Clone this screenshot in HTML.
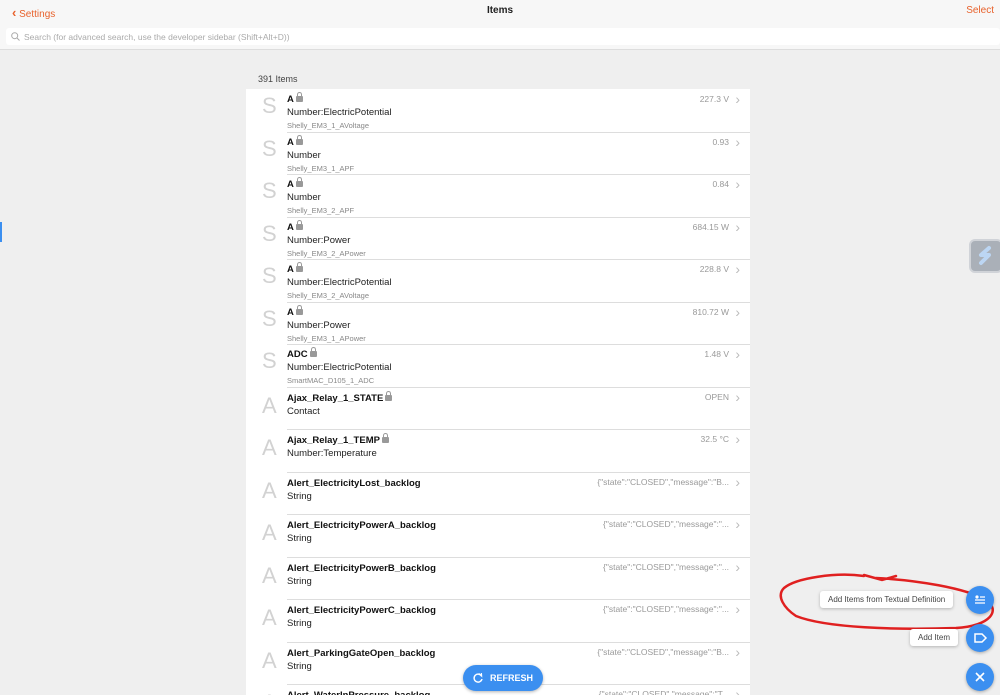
<!DOCTYPE html>
<html><head><meta charset="utf-8"><style>
*{margin:0;padding:0;box-sizing:border-box}
html,body{width:1000px;height:695px;overflow:hidden}
body{background:#efefef;font-family:"Liberation Sans",sans-serif;position:relative}
.hdr{position:absolute;left:0;top:0;width:1000px;height:50px;background:#f7f7f7;border-bottom:1px solid #ddd}
.back{position:absolute;left:12px;top:5px;color:#e8622c;font-size:10px}
.title{position:absolute;left:0;width:1000px;text-align:center;top:5px;font-size:10px;color:#222;font-weight:bold}
.sel{position:absolute;right:6px;top:5px;color:#e8622c;font-size:10px}
.search{position:absolute;left:6px;top:28px;width:994px;height:17px;background:#fff;border-radius:3px;color:#aaa;font-size:8.5px;padding:4px 0 0 18px}
.count{position:absolute;left:258px;top:74px;font-size:9px;color:#444}
.list{position:absolute;left:246px;top:89px;width:504px;height:606px;background:#fff;overflow:hidden}
.row{position:absolute;left:0;width:504px;height:42.5px}
.row .ic{position:absolute;left:16px;top:3px;font-size:22px;color:#d2d2d2;font-weight:normal}
.row .t{position:absolute;left:41px;top:4px;font-size:9.5px;font-weight:bold;color:#111}
.row .s{position:absolute;left:41px;top:17px;font-size:9.5px;color:#222}
.row .n{position:absolute;left:41px;top:31px;font-size:7.5px;color:#888}
.row .v{position:absolute;right:21px;top:4px;font-size:8.5px;color:#999}
.row .c{position:absolute;right:10px;top:1px;font-size:14px;color:#bbb}
.row .ln{position:absolute;left:41px;right:0;bottom:0;border-bottom:1px solid #ddd}
.lock{display:inline-block;width:7px;height:6px;background:#999;border-radius:1px;margin-left:2px;position:relative;top:0}
.lock:before{content:"";position:absolute;left:1px;top:-4px;width:3px;height:4px;border:1px solid #999;border-bottom:none;border-radius:3px 3px 0 0}
.fab{position:absolute;width:28px;height:28px;border-radius:50%;background:#3b8ff0;box-shadow:0 1px 3px rgba(0,0,0,.3);color:#fff;text-align:center}
.lbl{position:absolute;background:#fff;border-radius:3px;box-shadow:0 1px 3px rgba(0,0,0,.25);font-size:8px;color:#444;padding:4px 8px}
.refresh{position:absolute;left:463px;top:665px;width:80px;height:26px;border-radius:13px;background:#3b8ff0;color:#fff;font-size:9px;font-weight:bold;box-shadow:0 1px 3px rgba(0,0,0,.3);padding:8px 0 0 27px}
</style></head><body>
<div class="hdr">
<div class="back"><span style="font-size:13px;font-weight:bold">‹</span> Settings</div>
<div class="title">Items</div>
<div class="sel">Select</div>
<div class="search"><svg style="position:absolute;left:5px;top:4px" width="9" height="9" viewBox="0 0 9 9"><circle cx="3.7" cy="3.7" r="3" fill="none" stroke="#aaa"/><path d="M6 6l2.5 2.5" stroke="#aaa"/></svg>Search (for advanced search, use the developer sidebar (Shift+Alt+D))</div>
</div>
<div style="position:absolute;left:0;top:222px;width:2px;height:20px;background:#3b8ff0"></div>
<div class="count">391 Items</div>
<div class="list">
<div class="row" style="top:1px"><div class="ic">S</div><div class="t">A<span class="lock"></span></div><div class="s">Number:ElectricPotential</div><div class="n">Shelly_EM3_1_AVoltage</div><div class="v">227.3 V</div><div class="c">›</div><div class="ln"></div></div>
<div class="row" style="top:43.5px"><div class="ic">S</div><div class="t">A<span class="lock"></span></div><div class="s">Number</div><div class="n">Shelly_EM3_1_APF</div><div class="v">0.93</div><div class="c">›</div><div class="ln"></div></div>
<div class="row" style="top:86px"><div class="ic">S</div><div class="t">A<span class="lock"></span></div><div class="s">Number</div><div class="n">Shelly_EM3_2_APF</div><div class="v">0.84</div><div class="c">›</div><div class="ln"></div></div>
<div class="row" style="top:128.5px"><div class="ic">S</div><div class="t">A<span class="lock"></span></div><div class="s">Number:Power</div><div class="n">Shelly_EM3_2_APower</div><div class="v">684.15 W</div><div class="c">›</div><div class="ln"></div></div>
<div class="row" style="top:171px"><div class="ic">S</div><div class="t">A<span class="lock"></span></div><div class="s">Number:ElectricPotential</div><div class="n">Shelly_EM3_2_AVoltage</div><div class="v">228.8 V</div><div class="c">›</div><div class="ln"></div></div>
<div class="row" style="top:213.5px"><div class="ic">S</div><div class="t">A<span class="lock"></span></div><div class="s">Number:Power</div><div class="n">Shelly_EM3_1_APower</div><div class="v">810.72 W</div><div class="c">›</div><div class="ln"></div></div>
<div class="row" style="top:256px"><div class="ic">S</div><div class="t">ADC<span class="lock"></span></div><div class="s">Number:ElectricPotential</div><div class="n">SmartMAC_D105_1_ADC</div><div class="v">1.48 V</div><div class="c">›</div><div class="ln"></div></div>
<div class="row" style="top:298.5px"><div class="ic" style="top:5px">A</div><div class="t" style="top:5px">Ajax_Relay_1_STATE<span class="lock"></span></div><div class="s" style="top:18px">Contact</div><div class="v">OPEN</div><div class="c">›</div><div class="ln"></div></div>
<div class="row" style="top:341px"><div class="ic" style="top:5px">A</div><div class="t" style="top:5px">Ajax_Relay_1_TEMP<span class="lock"></span></div><div class="s" style="top:18px">Number:Temperature</div><div class="v">32.5 °C</div><div class="c">›</div><div class="ln"></div></div>
<div class="row" style="top:383.5px"><div class="ic" style="top:5px">A</div><div class="t" style="top:5px">Alert_ElectricityLost_backlog</div><div class="s" style="top:18px">String</div><div class="v">{"state":"CLOSED","message":"B...</div><div class="c">›</div><div class="ln"></div></div>
<div class="row" style="top:426px"><div class="ic" style="top:5px">A</div><div class="t" style="top:5px">Alert_ElectricityPowerA_backlog</div><div class="s" style="top:18px">String</div><div class="v">{"state":"CLOSED","message":"...</div><div class="c">›</div><div class="ln"></div></div>
<div class="row" style="top:468.5px"><div class="ic" style="top:5px">A</div><div class="t" style="top:5px">Alert_ElectricityPowerB_backlog</div><div class="s" style="top:18px">String</div><div class="v">{"state":"CLOSED","message":"...</div><div class="c">›</div><div class="ln"></div></div>
<div class="row" style="top:511px"><div class="ic" style="top:5px">A</div><div class="t" style="top:5px">Alert_ElectricityPowerC_backlog</div><div class="s" style="top:18px">String</div><div class="v">{"state":"CLOSED","message":"...</div><div class="c">›</div><div class="ln"></div></div>
<div class="row" style="top:553.5px"><div class="ic" style="top:5px">A</div><div class="t" style="top:5px">Alert_ParkingGateOpen_backlog</div><div class="s" style="top:18px">String</div><div class="v">{"state":"CLOSED","message":"B...</div><div class="c">›</div><div class="ln"></div></div>
<div class="row" style="top:596px"><div class="ic" style="top:5px">A</div><div class="t" style="top:5px">Alert_WaterInPressure_backlog</div><div class="v">{"state":"CLOSED","message":"T...</div><div class="c">›</div></div>
</div>
<div style="position:absolute;left:969px;top:239px;width:34px;height:34px;border-radius:6px;background:#aab0b8;border:2px solid #d0d3d8"><svg width="30" height="30" viewBox="0 0 30 30"><path d="M18 7l-8 7h8l-8 8" stroke="#bcd6f3" stroke-width="4" fill="none" stroke-linecap="round" stroke-linejoin="round"/></svg></div>
<svg style="position:absolute;left:776px;top:568px" width="224" height="66" viewBox="0 0 224 66"><path d="M88 8 C60 4 20 10 8 20 C0 28 8 40 20 48 C50 60 120 62 180 60 C215 58 225 42 210 32 C190 20 140 12 100 10 M88 7 L106 12 L120 8" stroke="#e02020" stroke-width="2.5" fill="none" stroke-linecap="round"/></svg>
<div class="lbl" style="left:820px;top:591px">Add Items from Textual Definition</div>
<div class="fab" style="left:966px;top:586px"><svg width="28" height="28" viewBox="0 0 28 28"><circle cx="11" cy="11" r="1.6" fill="#fff"/><path d="M14 11h5M9 14h10M9 17h10" stroke="#fff" stroke-width="1.3"/></svg></div>
<div class="lbl" style="left:910px;top:629px">Add Item</div>
<div class="fab" style="left:966px;top:624px"><svg width="28" height="28" viewBox="0 0 28 28"><path d="M9 10h7l4 4-4 4H9z" stroke="#fff" stroke-width="1.5" fill="none"/></svg></div>
<div class="fab" style="left:966px;top:663px"><svg width="28" height="28" viewBox="0 0 28 28"><path d="M10 10l8 8M18 10l-8 8" stroke="#fff" stroke-width="1.6"/></svg></div>
<div class="refresh"><svg style="position:absolute;left:9px;top:7px" width="12" height="12" viewBox="0 0 12 12"><path d="M9.5 4A4 4 0 1 0 10 7" stroke="#fff" stroke-width="1.4" fill="none"/><path d="M7 1.5l2.6 2.6-0.2-3" stroke="#fff" stroke-width="1.2" fill="none"/></svg>REFRESH</div>
</body></html>
